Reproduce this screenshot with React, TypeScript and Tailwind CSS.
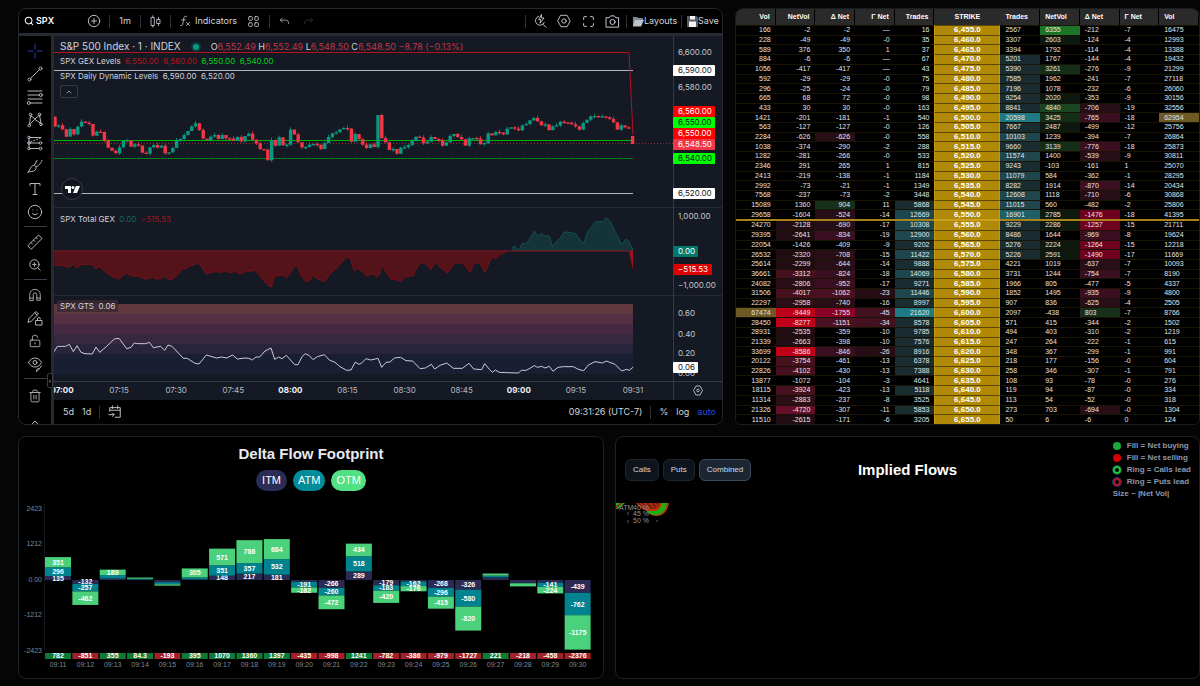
import type { ReactNode } from 'react'
import { ChevronUp, Maximize, Search, Smile, Trash2, ZoomIn } from 'lucide-react'

// Candle closes for 06:58 - 09:30, one per minute, in thirds of a pixel from the top of the page
const CLOSES = [
  380, 376, 388, 410, 387, 403, 380, 365, 368, 372, 407, 395, 396, 422, 443, 452, 460, 442, 423, 421, 440, 433, 437,
  458, 461, 442, 435, 443, 437, 460, 457, 444, 421, 417, 405, 393, 379, 370, 390, 416, 420, 410, 405, 417, 405, 415,
  416, 422, 411, 424, 408, 401, 419, 430, 447, 449, 481, 420, 437, 412, 436, 434, 389, 403, 427, 442, 441, 434, 432,
  434, 447, 429, 411, 400, 397, 388, 384, 386, 425, 402, 418, 434, 444, 433, 441, 345, 414, 427, 450, 447, 461, 443,
  442, 435, 423, 410, 413, 430, 425, 411, 417, 422, 437, 427, 408, 402, 411, 418, 437, 415, 414, 416, 433, 429, 400,
  406, 396, 398, 403, 386, 382, 386, 391, 376, 372, 361, 354, 364, 376, 373, 390, 379, 376, 365, 367, 368, 373, 379,
  389, 369, 359, 349, 348, 351, 349, 352, 357, 367, 389, 376, 382, 383, 432,
]

const GEX_NEGATIVE = [
  [0, 46], [12, 50], [25, 49], [43, 56], [56, 46], [68, 57], [83, 46], [113, 46], [126, 60], [135, 51], [150, 65],
  [173, 82], [195, 91], [208, 78], [218, 73], [238, 82], [253, 81], [268, 89], [283, 90], [295, 84], [306, 90],
  [323, 89], [331, 80], [343, 92], [356, 90], [370, 78], [383, 61], [398, 58], [413, 49], [433, 43], [445, 56],
  [456, 75], [478, 68], [503, 70], [513, 64], [528, 72], [543, 67], [558, 76], [570, 69], [603, 64], [616, 78],
  [628, 94], [641, 108], [652, 114], [664, 76], [674, 81], [684, 77], [698, 86], [710, 71], [720, 51], [730, 51],
  [741, 79], [755, 98], [770, 92], [776, 78], [788, 88], [812, 98], [828, 73], [848, 58], [863, 40], [878, 26],
  [888, 25], [901, 66], [910, 58], [926, 68], [938, 81], [950, 76], [958, 73], [968, 84], [976, 78], [984, 46],
  [998, 73], [1010, 90], [1024, 92], [1040, 97], [1056, 83], [1078, 80], [1088, 58], [1098, 41], [1111, 43],
  [1131, 61], [1144, 41], [1163, 58], [1180, 72], [1198, 45], [1218, 41], [1230, 46], [1248, 71], [1260, 40],
  [1278, 43], [1293, 71], [1313, 23], [1325, 30], [1338, 16], [1360, 7],
]

const GEX_POSITIVE = [
  [1373, 128], [1383, 124], [1395, 136], [1405, 115], [1418, 115], [1429, 98], [1441, 78], [1451, 93], [1463, 85],
  [1473, 93], [1486, 92], [1496, 126], [1508, 109], [1518, 100], [1530, 81], [1548, 82], [1566, 87], [1578, 105],
  [1589, 114], [1601, 80], [1613, 65], [1624, 50], [1648, 49], [1657, 38], [1670, 52], [1681, 75], [1693, 98],
  [1703, 120], [1715, 102], [1724, 108], [1737, 137],
]

const GTS = [
  [0, 440], [10, 424], [35, 424], [46, 418], [58, 440], [69, 422], [81, 442], [93, 446], [115, 447], [126, 426],
  [137, 442], [158, 424], [181, 402], [195, 400], [218, 431], [231, 427], [241, 414], [251, 416], [275, 416],
  [286, 412], [298, 428], [320, 424], [332, 436], [342, 420], [354, 424], [388, 460], [400, 460], [423, 475],
  [435, 477], [457, 450], [488, 459], [503, 456], [518, 459], [536, 450], [550, 462], [573, 459], [585, 460],
  [595, 465], [606, 456], [617, 456], [633, 438], [651, 429], [662, 463], [674, 456], [684, 461], [697, 451],
  [722, 479], [732, 479], [744, 455], [754, 446], [766, 452], [777, 464], [790, 455], [811, 449], [826, 465],
  [843, 472], [858, 485], [878, 496], [891, 495], [904, 471], [914, 478], [922, 475], [936, 461], [950, 465],
  [972, 460], [983, 487], [996, 472], [1008, 471], [1021, 459], [1040, 457], [1056, 467], [1076, 468], [1098, 491],
  [1114, 489], [1132, 478], [1142, 492], [1158, 481], [1178, 474], [1198, 490], [1225, 490], [1245, 475],
  [1259, 492], [1283, 494], [1292, 476], [1306, 493], [1315, 502], [1324, 495], [1336, 502], [1358, 503],
  [1393, 504], [1402, 496], [1417, 496], [1441, 482], [1450, 487], [1463, 484], [1473, 489], [1486, 484],
  [1497, 499], [1512, 487], [1528, 485], [1558, 485], [1573, 493], [1589, 497], [1603, 480], [1623, 470],
  [1646, 474], [1657, 468], [1683, 478], [1703, 498], [1718, 493], [1726, 496], [1738, 486],
]

const GTS_BANDS = [
  { y: 268, h: 10, fill: '#5e373f' },
  { y: 278, h: 10, fill: '#553044' },
  { y: 288, h: 10, fill: '#462a43' },
  { y: 298, h: 10, fill: '#37273f' },
  { y: 308, h: 10, fill: '#28243b' },
  { y: 318, h: 20, fill: '#1a1e33' },
]

const PRICE_TAGS = [
  { y: 34, text: '6,590.00', w: 42, fill: '#ffffff', color: '#131722' },
  { y: 75, text: '6,560.00', w: 42, fill: '#ff0000', color: '#ffffff' },
  { y: 97, text: '6,550.00', w: 42, fill: '#ff0000', color: '#ffffff' },
  { y: 86, text: '6,550.00', w: 42, fill: '#00ff00', color: '#131722' },
  { y: 108, text: '6,548.50', w: 42, fill: '#f23645', color: '#ffffff' },
  { y: 122, text: '6,540.00', w: 42, fill: '#00ff00', color: '#131722' },
  { y: 157, text: '6,520.00', w: 42, fill: '#ffffff', color: '#131722' },
  { y: 215, text: '0.00', w: 25, fill: '#00796b', color: '#ffffff' },
  { y: 233, text: '−515.53', w: 39, fill: '#dd0000', color: '#ffffff' },
  { y: 331, text: '0.06', w: 25, fill: '#ffffff', color: '#131722' },
]

const AXIS_LABELS = [
  { y: 16, text: '6,600.00' },
  { y: 51, text: '6,580.00' },
  { y: 180, text: '1,000.00' },
  { y: 249, text: '−1,000.00' },
  { y: 277, text: '0.60' },
  { y: 298, text: '0.40' },
  { y: 317, text: '0.20' },
  { y: 337, text: '0.00' },
]

const TIMES = ['07:00', '07:15', '07:30', '07:45', '08:00', '08:15', '08:30', '08:45', '09:00', '09:15', '09:31']

// vol, netVol, dNet, gNet, trades | strike | trades, netVol, dNet, gNet, vol
const CHAIN: [string, string, string][] = [
  ['166 -2 -2 — 16', '6,455.0', '2567 6355 -212 -7 16475'],
  ['228 -49 -49 -0 35', '6,460.0', '3307 2603 -124 -4 12993'],
  ['589 376 350 1 37', '6,465.0', '3394 1792 -114 -4 13388'],
  ['884 -6 -6 — 67', '6,470.0', '5201 1767 -144 -4 19432'],
  ['1056 -417 -417 — 43', '6,475.0', '5390 3261 -276 -9 21299'],
  ['592 -29 -29 -0 75', '6,480.0', '7585 1962 -241 -7 27118'],
  ['296 -25 -24 -0 79', '6,485.0', '7196 1078 -232 -6 26060'],
  ['665 68 72 -0 98', '6,490.0', '9254 2020 -353 -9 30156'],
  ['433 30 30 -0 163', '6,495.0', '8841 4840 -706 -19 32556'],
  ['1421 -201 -181 -1 540', '6,500.0', '20598 3425 -765 -18 62954'],
  ['563 -127 -127 -0 126', '6,505.0', '7667 2487 -499 -12 25756'],
  ['2284 -626 -626 -0 558', '6,510.0', '10103 1239 -394 -7 26864'],
  ['1038 -374 -290 -2 288', '6,515.0', '9660 3139 -776 -18 25873'],
  ['1282 -281 -266 -0 533', '6,520.0', '11574 1400 -539 -9 30811'],
  ['2346 291 265 1 815', '6,525.0', '9243 -103 -161 1 25070'],
  ['2413 -219 -138 -1 1184', '6,530.0', '11079 584 -362 -1 28295'],
  ['2992 -73 -21 -1 1349', '6,535.0', '8282 1914 -870 -14 20434'],
  ['7568 -237 -73 -2 3448', '6,540.0', '12608 1118 -710 -6 30868'],
  ['15089 1360 904 11 5868', '6,545.0', '11015 560 -482 -2 25806'],
  ['29658 -1604 -524 -14 12669', '6,550.0', '16901 2785 -1476 -18 41395'],
  ['24270 -2128 -690 -17 10308', '6,555.0', '9229 2286 -1257 -15 21711'],
  ['29395 -2641 -834 -19 12900', '6,560.0', '8486 1644 -969 -8 19624'],
  ['22054 -1426 -409 -9 9202', '6,565.0', '5276 2224 -1264 -15 12218'],
  ['26532 -2320 -708 -15 11422', '6,570.0', '5226 2591 -1490 -17 11669'],
  ['25614 -2299 -644 -14 9888', '6,575.0', '4221 1019 -637 -7 10093'],
  ['36661 -3312 -824 -18 14069', '6,580.0', '3731 1244 -754 -7 8190'],
  ['24082 -2806 -952 -17 9271', '6,585.0', '1966 805 -477 -5 4337'],
  ['31506 -4017 -1062 -23 11446', '6,590.0', '1852 1495 -935 -9 4800'],
  ['22297 -2958 -740 -16 8997', '6,595.0', '907 836 -625 -4 2505'],
  ['67474 -9449 -1755 -45 21620', '6,600.0', '2097 -438 803 -7 8766'],
  ['28450 -8277 -1151 -34 8578', '6,605.0', '571 415 -344 -2 1502'],
  ['28931 -2535 -359 -10 9785', '6,610.0', '494 403 -310 -2 1219'],
  ['21339 -2663 -398 -10 7576', '6,615.0', '247 264 -222 -1 615'],
  ['33699 -8586 -846 -26 8916', '6,620.0', '348 367 -299 -1 991'],
  ['20122 -3754 -461 -13 6378', '6,625.0', '218 177 -156 -0 604'],
  ['22826 -4102 -430 -13 7388', '6,630.0', '258 346 -307 -1 791'],
  ['13877 -1072 -104 -3 4641', '6,635.0', '108 93 -78 -0 276'],
  ['18115 -3924 -423 -13 5118', '6,640.0', '119 94 -87 -0 334'],
  ['11314 -2883 -237 -8 3525', '6,645.0', '113 54 -52 -0 318'],
  ['21326 -4720 -307 -11 5853', '6,650.0', '273 703 -694 -0 1304'],
  ['11510 -2615 -171 -6 3205', '6,655.0', '50 6 -6 0 124'],
]

type Column = 'vol' | 'netVol' | 'dNet' | 'gNet' | 'trades'

const LEFT: Column[] = ['vol', 'netVol', 'dNet', 'gNet', 'trades']
const RIGHT: Column[] = ['trades', 'netVol', 'dNet', 'gNet', 'vol']

const HEADINGS: Record<Column, string> = {
  vol: 'Vol',
  netVol: 'NetVol',
  dNet: 'Δ Net',
  gNet: 'Γ Net',
  trades: 'Trades',
}

// Thresholds run from strongest to weakest
const HEAT: Record<Column, { up: [number, string][]; down: [number, string][] }> = {
  vol: { up: [[60000, 'bg-[#6d5923]']], down: [] },
  netVol: {
    up: [[6000, 'bg-[#1c7428]'], [4000, 'bg-[#1b4420]'], [3000, 'bg-[#152e17]'], [2000, 'bg-[#0d190e]']],
    down: [[8000, 'bg-[#c00018]'], [4500, 'bg-[#651028]'], [3300, 'bg-[#47101f]'], [2700, 'bg-[#2c0e17]'], [2000, 'bg-[#200c12]']],
  },
  dNet: {
    up: [[800, 'bg-[#17301a]']],
    down: [[1500, 'bg-[#8a0026]'], [1200, 'bg-[#700020]'], [1000, 'bg-[#4c1024]'], [750, 'bg-[#3a1020]'], [500, 'bg-[#280e17]']],
  },
  gNet: { up: [], down: [[30, 'bg-[#431022]'], [20, 'bg-[#260d15]']] },
  trades: {
    up: [[20000, 'bg-[#1e7a84]'], [16000, 'bg-[#1f5f68]'], [10000, 'bg-[#1e464c]'], [5000, 'bg-[#192c30]']],
    down: [],
  },
}

function heat(column: Column, text: string) {
  const value = Number(text)
  const steps = value < 0 ? HEAT[column].down : HEAT[column].up
  return steps.find(([min]) => Math.abs(value) >= min)?.[1] ?? ''
}

const FOOTPRINT = [
  { time: '09:11', total: '782', parts: [135, 296, 351] },
  { time: '09:12', total: '-851', parts: [-132, -257, -462] },
  { time: '09:13', total: '355', parts: [48, 118, 189] },
  { time: '09:14', total: '84.3', parts: [12, 30, 42] },
  { time: '09:15', total: '-193', parts: [-73, -72, -48] },
  { time: '09:16', total: '395', parts: [20, 70, 305] },
  { time: '09:17', total: '1070', parts: [148, 351, 571] },
  { time: '09:18', total: '1360', parts: [217, 357, 786] },
  { time: '09:19', total: '1397', parts: [181, 532, 684] },
  { time: '09:20', total: '-435', parts: [-62, -191, -182] },
  { time: '09:21', total: '-998', parts: [-266, -260, -472] },
  { time: '09:22', total: '1241', parts: [289, 518, 434] },
  { time: '09:23', total: '-782', parts: [-179, -183, -420] },
  { time: '09:24', total: '-386', parts: [-48, -162, -176] },
  { time: '09:25', total: '-979', parts: [-268, -296, -415] },
  { time: '09:26', total: '-1727', parts: [-326, -580, -820] },
  { time: '09:27', total: '221', parts: [90, 58, 73] },
  { time: '09:28', total: '-218', parts: [-100, -12, -106] },
  { time: '09:29', total: '-458', parts: [-93, -141, -224] },
  { time: '09:30', total: '-2376', parts: [-439, -762, -1175] },
]

const PART_FILLS = ['#2a2a55', '#00838f', '#4bd07b']

function toPoints(list: number[][], top: number) {
  return list.map(([x, y]) => `${x / 3},${top + y / 3}`).join(' ')
}

function Candles() {
  return (
    <g>
      {CLOSES.map((close, i) => {
        const last = i === CLOSES.length - 1
        const open = i === 0 ? 350 : last ? 408 : CLOSES[i - 1]
        const color = close > open ? '#f23645' : '#089981'
        const x = 1 + i * 3.8
        const top = Math.min(open, close) / 3 - 36
        const height = Math.max(Math.abs(close - open) / 3, 1.3)
        const above = last ? 0 : ((i * 7) % 5) * 0.6
        const below = last ? 0 : ((i * 11) % 4) * 0.5
        return (
          <g key={i} fill={color}>
            <rect x={x - 0.4} y={top - above} width={0.8} height={height + above + below} />
            <rect x={x - 1.7} y={top} width={3.4} height={height} />
          </g>
        )
      })}
    </g>
  )
}

function PriceChart() {
  return (
    <svg viewBox="0 0 668 364" className="block w-full bg-[#151924]" fontFamily="Inter, sans-serif" fontSize="8">
      {/* Dynamic levels */}
      <path d="M0 34.5H579M0 157.5H579" stroke="#b2b5be" fill="none" />
      <path d="M0 104.5H579" stroke="#00b400" fill="none" />
      <path d="M0 122.5H579" stroke="#006a14" fill="none" />
      <path d="M0 122.5H579" stroke="#00a81c" strokeDasharray="1 2" fill="none" />
      <path d="M0 107.5H619" stroke="#f23645" strokeOpacity="0.6" strokeDasharray="1 2" fill="none" />
      <path d="M0 16.5H575L579 99" stroke="#b3121d" fill="none" />
      <Candles />

      {/* TradingView badge */}
      <circle cx="18" cy="153" r="10.5" fill="#12151e" stroke="#363a45" />
      <path d="M11 150h6v7h-3v-4h-3zM22 150h4l-3 7h-4z" fill="#fff" />
      <circle cx="19" cy="151.500" r="1.500" fill="#fff" />

      {/* Total GEX */}
      <polygon points={`0,215 ${toPoints(GEX_NEGATIVE, 213)}`} fill="#541219" />
      <polyline points={toPoints(GEX_NEGATIVE, 213)} stroke="#7a1018" fill="none" />
      <polygon points={`458,215 ${toPoints(GEX_POSITIVE, 169)} 579,215`} fill="#143438" />
      <polyline points={toPoints(GEX_POSITIVE, 169)} stroke="#12504e" fill="none" />
      <path d="M575 215L579 234V215z" fill="#a3121b" />
      <path d="M0 215H579" stroke="#8a1a22" fill="none" />

      {/* GTS bands */}
      {GTS_BANDS.map((band) => (
        <rect key={band.y} x="0" y={band.y} width="579" height={band.h} fill={band.fill} />
      ))}
      <polyline points={toPoints(GTS, 169)} stroke="#c9cbd6" strokeLinejoin="round" fill="none" />

      {/* Pane borders */}
      <path d="M0 171.500H668M0 259.500H668" stroke="#252935" fill="none" />
      <path d="M0 345.500H668M619.500 0V364" stroke="#363a45" fill="none" />

      {AXIS_LABELS.map((label) => (
        <text key={label.y} x="624" y={label.y + 3} fill="#c3c6d0">
          {label.text}
        </text>
      ))}
      {PRICE_TAGS.map((tag) => (
        <g key={tag.y}>
          <rect x="619" y={tag.y - 5} width={tag.w} height="11" rx="1" fill={tag.fill} />
          <text x="624" y={tag.y + 3} fill={tag.color}>
            {tag.text}
          </text>
        </g>
      ))}
      {TIMES.map((time, i) => (
        <text
          key={time}
          x={8 + i * 57.1}
          y="357"
          textAnchor="middle"
          fill={i % 4 === 0 ? '#f0f1f5' : '#b6b9c4'}
          fontWeight={i % 4 === 0 ? 700 : 400}
        >
          {time}
        </text>
      ))}
      <g stroke="#b2b5be" fill="none">
        <path d="M642 350h4l2.500 4.500-2.500 4.500h-4l-2.500-4.500z" />
        <circle cx="644" cy="354.500" r="1.300" />
      </g>
    </svg>
  )
}

function Legend() {
  return (
    <div className="absolute top-[3px] left-[6px] flex flex-col items-start text-[8px] leading-[15px] text-[#d1d4dc]">
      <div className="flex items-center">
        <span className="text-[10px]">S&amp;P 500 Index · 1 · INDEX</span>
        <span className="mx-3 size-[6px] rounded-full bg-[#089981] ring-2 ring-[#0b3a3c]" />
        <span className="text-[9px]">
          O<span className="text-[#c0364a]">6,552.49</span> H<span className="text-[#c0364a]">6,552.49</span> L
          <span className="text-[#c0364a]">6,548.50</span> C<span className="text-[#c0364a]">6,548.50</span>{' '}
          <span className="text-[#c0364a]">−8.78 (−0.13%)</span>
        </span>
      </div>
      <div>
        SPX GEX Levels&nbsp; <span className="text-[#b5121b]">6,550.00&nbsp; 6,560.00</span>&nbsp;{' '}
        <span className="text-[#00d41c]">6,550.00&nbsp; 6,540.00</span>
      </div>
      <div>SPX Daily Dynamic Levels&nbsp; 6,590.00&nbsp; 6,520.00</div>
      <button
        aria-label="Collapse legend"
        className="mt-px grid h-[13px] w-[18px] place-items-center rounded-xs border border-[#363a45]"
      >
        <ChevronUp size={8} />
      </button>
    </div>
  )
}

function Glyph({ children, size = 16 }: { children: ReactNode; size?: number }) {
  return (
    <svg
      width={size}
      height={size}
      viewBox="0 0 16 16"
      fill="none"
      stroke="currentColor"
      strokeLinecap="round"
      strokeLinejoin="round"
    >
      {children}
    </svg>
  )
}

function SideTool({ label, children }: { label: string; children: ReactNode }) {
  return (
    <button aria-label={label} className="grid h-[23px] w-full shrink-0 place-items-center">
      {children}
    </button>
  )
}

function SideDivider() {
  return <div className="my-[3px] h-px w-[23px] shrink-0 bg-[#3a3d47]" />
}

function Sidebar() {
  return (
    <div className="absolute inset-y-0 left-0 flex w-8 flex-col items-center overflow-hidden bg-black pt-[3px] text-[#b4b6be]">
      <SideTool label="Cross">
        <span className="text-[#2a3cb8]">
          <Glyph>
            <path d="M8 1v5M8 10v5M1 8h5M10 8h5" />
          </Glyph>
        </span>
      </SideTool>
      <SideTool label="Trend line">
        <Glyph>
          <circle cx="2.500" cy="13.500" r="1.500" />
          <circle cx="13.500" cy="2.500" r="1.500" />
          <path d="M3.500 12.500l9-9" />
        </Glyph>
      </SideTool>
      <SideTool label="Fib retracement">
        <Glyph>
          <path d="M1 2h14M1 6h11M1 10h14M4 14h11" />
          <circle cx="13.800" cy="6" r="1.500" />
          <circle cx="1.800" cy="14" r="1.500" />
        </Glyph>
      </SideTool>
      <SideTool label="Patterns">
        <Glyph>
          <path d="M2.500 12.500l1-9L8 7l4.500-4L14 11.500 8 7.500z" />
          <circle cx="2.300" cy="13.500" r="1.300" />
          <circle cx="3.500" cy="2.500" r="1.300" />
          <circle cx="12.500" cy="2.500" r="1.300" />
          <circle cx="14" cy="12.300" r="1.300" />
        </Glyph>
      </SideTool>
      <SideTool label="Projection">
        <Glyph>
          <path d="M3 2.500h11M3 8h9M3 13.500h9M2 4v8" />
          <path d="M4 6.500l9-3" strokeDasharray="1 2" />
          <circle cx="2" cy="2.500" r="1.300" />
          <circle cx="2" cy="8" r="1.300" />
          <circle cx="2" cy="13.500" r="1.300" />
          <circle cx="13.500" cy="8" r="1.300" />
          <circle cx="13.500" cy="13.500" r="1.300" />
        </Glyph>
      </SideTool>
      <SideTool label="Brush">
        <Glyph>
          <path d="M1 14c2-1 1.500-3 3-5s4.500-2 5 0-1 4.500-4 4.500zM7.500 7l2.500-4.500M9.500 8.500c2 0 4-3 5.500-6" />
        </Glyph>
      </SideTool>
      <SideTool label="Text">
        <Glyph>
          <path d="M3 4.500v-2h10v2M8 2.500v11M6 13.500h4" />
        </Glyph>
      </SideTool>
      <SideTool label="Emoji">
        <Smile size={16} strokeWidth={1.500} />
      </SideTool>
      <SideDivider />
      <SideTool label="Measure">
        <Glyph>
          <path d="M1 11.500L11.500 1 15 4.500 4.500 15zM4 8.500l1.500 1.500M6.500 6l1.500 1.500M9 3.500L10.500 5" />
        </Glyph>
      </SideTool>
      <SideTool label="Zoom in">
        <ZoomIn size={14} strokeWidth={1.700} />
      </SideTool>
      <SideDivider />
      <SideTool label="Magnet">
        <Glyph size={14}>
          <path d="M2 14V7.500a6 6 0 0112 0V14h-4V7.500a2 2 0 00-4 0V14zM2 11.500h4M10 11.500h4" />
        </Glyph>
      </SideTool>
      <SideTool label="Stay in drawing mode">
        <Glyph>
          <path d="M1 12l1-3.500L9 1.500 11.500 4l-7 7zM8 3l2 2" />
          <rect x="9" y="10.500" width="6" height="4.500" />
          <path d="M10.500 10.500V9a1.500 1.500 0 013 0" />
        </Glyph>
      </SideTool>
      <SideTool label="Lock drawings">
        <Glyph size={14}>
          <rect x="2.500" y="7" width="11" height="7.500" rx="1" />
          <path d="M5 7V4.500a3 3 0 016-.5M8 10v1.500" />
        </Glyph>
      </SideTool>
      <SideTool label="Hide drawings">
        <Glyph>
          <path d="M1.500 6.500C3 3.500 5.500 2 8 2s5 1.500 6.500 4.500C13 9.500 10.500 11 8 11S3 9.500 1.500 6.500z" />
          <circle cx="8" cy="6.500" r="2" />
          <path d="M9.500 15c0-1.500 1-2.500 2-2.500s1 1.500-2 2.500zM12.500 12.500L14.500 10" />
        </Glyph>
      </SideTool>
      <SideDivider />
      <div className="flex w-full flex-col gap-1 pt-[2px]">
        <SideTool label="Remove">
          <Trash2 size={14} strokeWidth={1.500} />
        </SideTool>
        <SideTool label="More">
          <ChevronUp size={16} strokeWidth={1.500} />
        </SideTool>
      </div>
    </div>
  )
}

function Rule() {
  return <div className="h-[13px] w-px shrink-0 bg-[#2f323b]" />
}

function Tool({ label, children }: { label: string; children: ReactNode }) {
  return (
    <button aria-label={label} className="grid h-full w-[24px] place-items-center">
      {children}
    </button>
  )
}

function Toolbar() {
  return (
    <div className="flex h-[24px] items-center bg-black text-[9px] text-[#d1d4dc]">
      <button className="flex w-[60px] items-center gap-[2px] pl-[5px] font-semibold text-white">
        <Search size={10} strokeWidth={2.500} />
        SPX
      </button>
      <button aria-label="Compare symbol" className="grid w-[30px] place-items-center">
        <Glyph size={14}>
          <circle cx="8" cy="8" r="6.500" />
          <path d="M8 5v6M5 8h6" />
        </Glyph>
      </button>
      <Rule />
      <button className="w-[30px]">1m</button>
      <Rule />
      <button aria-label="Chart style" className="grid w-[29px] place-items-center">
        <Glyph size={13}>
          <rect x="3" y="3" width="3.500" height="10" />
          <rect x="10" y="5.500" width="3.500" height="5" />
          <path d="M4.700 1v2M4.700 13v2M11.700 3v2.500M11.700 10.500V13" />
        </Glyph>
      </button>
      <Rule />
      <button className="flex items-center gap-[4px] pl-[8px]">
        <Glyph size={12}>
          <path d="M10 2c-2-1-3 0-3.500 2L5 12c-.4 2-1.500 2.500-3 2M3.500 6.500h5M10 10l4 4M14 10l-4 4" />
        </Glyph>
        Indicators
      </button>
      <button aria-label="Templates" className="grid w-[32px] place-items-center">
        <Glyph size={13}>
          <rect x="2" y="2" width="4.500" height="4.500" rx="1" />
          <rect x="9.500" y="2" width="4.500" height="4.500" rx="1" />
          <rect x="2" y="9.500" width="4.500" height="4.500" rx="1" />
          <rect x="9.500" y="9.500" width="4.500" height="4.500" rx="1" />
        </Glyph>
      </button>
      <Rule />
      <div className="flex h-full pl-[2px]">
        <Tool label="Undo">
          <Glyph size={11}>
            <path d="M5 3L2 6l3 3M2 6h8c2.500 0 4 1.500 4 5" />
          </Glyph>
        </Tool>
        <Tool label="Redo">
          <span className="text-[#3a3d47]">
            <Glyph size={11}>
              <path d="M11 3l3 3-3 3M14 6H6c-2.500 0-4 1.500-4 5" />
            </Glyph>
          </span>
        </Tool>
      </div>
      <div className="ml-auto flex h-full items-center">
        <Rule />
        <div className="flex h-full px-[2px]">
          <Tool label="Quick search">
            <Glyph size={14}>
              <path d="M6.500 2.500a5.300 5.300 0 106.500 7M11.500 12l3.500 3M9.500 1L6.500 6.500H9L8 10.500l4.500-6H10z" />
            </Glyph>
          </Tool>
          <Tool label="Settings">
            <Glyph size={14}>
              <path d="M4.500 1.500h7L15 8l-3.500 6.500h-7L1 8z" />
              <circle cx="8" cy="8" r="2.500" />
            </Glyph>
          </Tool>
          <Tool label="Fullscreen">
            <Maximize size={13} strokeWidth={1.800} />
          </Tool>
          <Tool label="Snapshot">
            <Glyph size={15}>
              <path d="M1.500 4h3L6 2h4l1.500 2h3v10h-13z" />
              <circle cx="8" cy="8.500" r="2.700" />
            </Glyph>
          </Tool>
        </div>
        <Rule />
        <button className="flex w-[54px] items-center pl-[5px]">
          <svg width="12" height="11" viewBox="0 0 12 11">
            <path d="M1 1l4 0 1 1h5v2L9 10H1z" fill="#7d8a93" />
            <path d="M3 4h9l-3 6.500H1z" fill="#b9c4ca" />
          </svg>
          Layouts
        </button>
        <Rule />
        <button className="flex w-[40px] items-center pl-[5px]">
          <svg width="11" height="11" viewBox="0 0 11 11">
            <path d="M0 0h9.500L11 1.500V11H0z" fill="#565b62" />
            <path d="M3 0h5v3.500H3zM2 5.500h7V11H2z" fill="#f2f4f6" />
          </svg>
          Save
        </button>
      </div>
    </div>
  )
}

function ChartPanel() {
  return (
    <section className="overflow-hidden rounded-lg border border-[#25282f] font-['Inter',sans-serif]">
      <Toolbar />
      <div className="relative border-t-3 border-[#262a33] pl-8">
        <Sidebar />
        <div className="border-l-3 border-[#262a33]">
          <div className="relative">
            <PriceChart />
            <Legend />
            <p className="absolute top-[177px] left-[6px] text-[8px] leading-[12px] text-[#d1d4dc]">
              SPX Total GEX&nbsp; <span className="text-[#136a5f]">0.00</span>&nbsp;{' '}
              <span className="text-[#a3121b]">−515.53</span>
            </p>
            <p className="absolute top-[264px] left-[3px] bg-[#3a2832]/80 px-[3px] text-[8px] leading-[12px] text-[#d1d4dc]">
              SPX GTS&nbsp; 0.06
            </p>
          </div>
          <div className="flex h-6 items-center gap-[8px] bg-black px-[6px] pl-[9px] text-[9px] text-[#d1d4dc]">
            <button>5d</button>
            <button>1d</button>
            <Rule />
            <button aria-label="Go to date">
              <Glyph size={14}>
                <path d="M2 7V3h12v11H8M2 6h12M5 1v3M11 1v3M1 11h6M5 9l2 2-2 2" />
              </Glyph>
            </button>
            <span className="ml-auto">09:31:26 (UTC-7)</span>
            <Rule />
            <button>%</button>
            <button>log</button>
            <button className="text-[#2f4fd8]">auto</button>
          </div>
        </div>
        <button
          aria-label="Toggle toolbar"
          className="absolute bottom-[36px] left-[28px] grid h-[15px] w-[6px] place-items-center rounded-xs border border-[#363a45] bg-black text-[6px] text-[#d1d4dc]"
        >
          ‹
        </button>
      </div>
    </section>
  )
}

function ChainTable() {
  return (
    <section className="overflow-hidden rounded-t-lg rounded-b-md border border-[#1b1c20] bg-black">
      <table className="h-full w-full table-fixed border-separate border-spacing-0 text-[7px] leading-[8px] text-[#e4e4e4]">
        <colgroup>
          <col span={5} />
          <col className="w-[66px]" />
          <col span={5} />
        </colgroup>
        <thead>
          <tr className="h-[16px] bg-[#2b2a2a] text-white">
            {LEFT.map((column) => (
              <th key={column} className="border-r border-black px-[5px] text-right">
                {HEADINGS[column]}
              </th>
            ))}
            <th>STRIKE</th>
            {RIGHT.map((column) => (
              <th key={column} className="border-r border-black px-[5px] text-left">
                {HEADINGS[column]}
              </th>
            ))}
          </tr>
        </thead>
        <tbody>
          {CHAIN.map(([left, strike, right]) => {
            const spot = strike === '6,555.0'
            const edge = spot ? 'border-t-2 border-t-[#a8831c]' : 'border-t border-t-[#191405]'
            return (
              <tr key={strike}>
                {left.split(' ').map((text, i) => (
                  <td key={i} className={`p-0 pr-[5px] text-right ${edge} ${heat(LEFT[i], text)}`}>
                    {text}
                  </td>
                ))}
                <td
                  className={`border-x border-x-[#c9980a] bg-[#b08a06] p-0 text-center text-[8px] font-bold text-white ${
                    spot ? 'border-t-2 border-t-[#c9a020]' : 'border-t border-t-[#5c4706]'
                  }`}
                >
                  {strike}
                </td>
                {right.split(' ').map((text, i) => (
                  <td key={i} className={`p-0 pl-[5px] text-left ${edge} ${heat(RIGHT[i], text)}`}>
                    {text}
                  </td>
                ))}
              </tr>
            )
          })}
        </tbody>
      </table>
    </section>
  )
}

function FootprintBar({ index }: { index: number }) {
  const { time, total, parts } = FOOTPRINT[index]
  const up = parts[0] > 0
  let edge = 82
  return (
    <g transform={`translate(${26 + index * 27.35} 0)`} textAnchor="middle">
      {parts.map((value, i) => {
        const height = Math.abs(value) * 0.0293
        const y = up ? edge - height : edge
        edge = up ? y : y + height
        return (
          <g key={i}>
            <rect y={y} width="26" height={height} fill={PART_FILLS[i]} />
            {Math.abs(value) > 130 && (
              <text x="13" y={y + height / 2 + 2.5} fill="#fff" fontWeight="700">
                {value}
              </text>
            )}
          </g>
        )
      })}
      <rect y="155" width="26" height="6" fill={up ? '#0f7a35' : '#a3222a'} />
      <text x="13" y="160" fill="#fff" fontWeight="700">
        {total}
      </text>
      <text x="13" y="169" fill="#7f8796">
        {time}
      </text>
    </g>
  )
}

function FootprintPanel() {
  return (
    <section className="overflow-hidden rounded-lg border border-[#1b2127] bg-black">
      <h2 className="pt-[7px] text-center text-[15px] leading-[20px] font-bold text-[#e8eaf0]">Delta Flow Footprint</h2>
      <div className="mt-[6px] flex justify-center gap-[6px] text-[11px] text-white">
        <button className="h-[21px] rounded-full bg-[#2a2d55] px-[6px]">ITM</button>
        <button className="h-[21px] rounded-full bg-[#008c99] px-[5px]">ATM</button>
        <button className="h-[21px] rounded-full bg-[#52e084] px-[5px]">OTM</button>
      </div>
      <svg viewBox="0 0 584 180" className="mt-[7px] block w-full" fontSize="7">
        <path d="M25.500 6V152" stroke="#15181d" fill="none" />
        {['2423', '1212', '0.00', '-1212', '-2423'].map((label, i) => (
          <text key={label} x="23" y={12.5 + i * 35.5} textAnchor="end" fill="#7f8796">
            {label}
          </text>
        ))}
        {FOOTPRINT.map((bar, i) => (
          <FootprintBar key={bar.time} index={i} />
        ))}
      </svg>
    </section>
  )
}

const FLOW_KEYS = [
  { label: 'Fill = Net buying', dot: 'bg-[#1ea83c]' },
  { label: 'Fill = Net selling', dot: 'bg-[#d40000]' },
  { label: 'Ring = Calls lead', dot: 'border-2 border-[#1ec83c] ring-1 ring-[#1e3a5a]' },
  { label: 'Ring = Puts lead', dot: 'border-2 border-[#b01830] ring-1 ring-[#1e3a6a]' },
]

function FlowsPanel() {
  const tab = 'h-[22px] rounded-md border px-[7px]'
  return (
    <section className="overflow-hidden rounded-lg border border-[#1b2127] bg-black">
      <div className="grid h-[66px] grid-cols-[1fr_auto_1fr] items-center">
        <div className="flex gap-[4px] pl-[9px] text-[8px] text-[#d5dae2]">
          <button className={`${tab} border-[#1c2630] bg-[#0d141b]`}>Calls</button>
          <button className={`${tab} border-[#1c2630] bg-[#0d141b]`}>Puts</button>
          <button className={`${tab} border-[#3a4a58] bg-[#1b2632]`}>Combined</button>
        </div>
        <h2 className="text-[15px] font-bold text-white">Implied Flows</h2>
        <ul className="justify-self-end pr-[8px] text-[8px] leading-[12px] font-bold text-[#8f97aa]">
          {FLOW_KEYS.map((key) => (
            <li key={key.label} className="flex items-center gap-[6px]">
              <span className={`size-[8px] rounded-full ${key.dot}`} />
              {key.label}
            </li>
          ))}
          <li>Size ~ |Net Vol|</li>
        </ul>
      </div>
      <svg width="60" height="26" viewBox="0 0 60 26" fontSize="7" fill="#8d929c">
        <path d="M0 0h9L2 6H0z" fill="#22b31c" />
        <path d="M4 0h3L0 6V3z" fill="#7c3a10" />
        <path d="M20 0h33c-1 8-6 13-12 13-5 0-8-2-10-5-4-1-8-4-11-8z" fill="#c03408" />
        <path d="M31 8c2 3 5 4 9 4 6 0 10-5 11-12h-5c-1 5-4 8-8 8z" fill="#1fae14" />
        <path d="M21 0h23c-2 4-4 6-8 6-6 0-11-2-15-6z" fill="#8a1c0c" />
        <path d="M24 0l4 4M29 0l5 6M34 0l4 5M39 0l2 3" stroke="#b04a10" fill="none" />
        <text x="3" y="7">ATM</text>
        <text x="17" y="7">40 %</text>
        <text x="17" y="13">45 %</text>
        <text x="17" y="20">50 %</text>
        <path d="M12 9v3M12 17v3M41 17v2" stroke="#5a5f68" fill="none" />
      </svg>
    </section>
  )
}

export default function App() {
  return (
    <main className="flex min-h-screen flex-col gap-[11px] bg-[#050506] pt-2 pl-[18px] font-['Liberation_Sans',Arial,sans-serif]">
      <div className="grid grid-cols-[705fr_465fr] gap-[12px]">
        <ChartPanel />
        <ChainTable />
      </div>
      <div className="grid grid-cols-[586fr_585fr] gap-[11px]">
        <FootprintPanel />
        <FlowsPanel />
      </div>
    </main>
  )
}
